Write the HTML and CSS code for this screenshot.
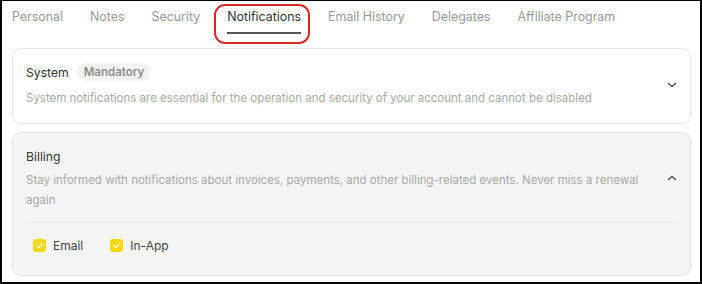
FILE: index.html
```html
<!DOCTYPE html>
<html lang="en">
<head>
    <meta charset="UTF-8">
    <meta name="viewport" content="width=device-width, initial-scale=1.0">
    <title>Notifications</title>
    <link rel="stylesheet" href="styles.css">
</head>
<body>
    <div class="frame">
        <!-- Settings tabs -->
        <nav class="tabs">
            <a class="tab">Personal</a>
            <a class="tab">Notes</a>
            <a class="tab">Security</a>
            <a class="tab active">Notifications<span class="highlight"></span></a>
            <a class="tab">Email History</a>
            <a class="tab">Delegates</a>
            <a class="tab">Affiliate Program</a>
        </nav>

        <div class="sections">
            <!-- System (collapsed) -->
            <div class="section">
                <div class="section-head">
                    <div class="section-text">
                        <div class="section-title">System <span class="badge">Mandatory</span></div>
                        <p class="section-desc">System notifications are essential for the operation and security of your account and cannot be disabled</p>
                    </div>
                    <svg class="chevron" width="12" height="12" viewBox="0 0 12 12"><path d="M2.5 4.5 L6 7.5 L9.5 4.5" fill="none" stroke="#444" stroke-width="1.3" stroke-linecap="round" stroke-linejoin="round"/></svg>
                </div>
            </div>

            <!-- Billing (expanded) -->
            <div class="section open">
                <div class="section-head">
                    <div class="section-text">
                        <div class="section-title">Billing</div>
                        <p class="section-desc">Stay informed with notifications about invoices, payments, and other billing-related events. Never miss a renewal again</p>
                    </div>
                    <svg class="chevron" width="12" height="12" viewBox="0 0 12 12"><path d="M2.5 7.5 L6 4.5 L9.5 7.5" fill="none" stroke="#444" stroke-width="1.3" stroke-linecap="round" stroke-linejoin="round"/></svg>
                </div>
                <div class="channels">
                    <label class="channel"><span class="check"><svg width="9" height="9" viewBox="0 0 10 10"><path d="M2 5.2 L4.2 7.3 L8 2.8" fill="none" stroke="#fff" stroke-width="1.3" stroke-linecap="round" stroke-linejoin="round"/></svg></span>Email</label>
                    <label class="channel"><span class="check"><svg width="9" height="9" viewBox="0 0 10 10"><path d="M2 5.2 L4.2 7.3 L8 2.8" fill="none" stroke="#fff" stroke-width="1.3" stroke-linecap="round" stroke-linejoin="round"/></svg></span>In-App</label>
                </div>
            </div>
        </div>
    </div>
</body>
</html>
```

FILE: styles.css
```css
html, body {
    margin: 0;
    padding: 0;
    background: #fff;
}
body {
    font-family: Inter, "Noto Sans", sans-serif;
    color: #333;
}
.frame {
    box-sizing: border-box;
    width: 702px;
    height: 284px;
    border-style: solid;
    border-color: #000;
    border-width: 1px 2px 2px 2px;
    padding: 0 9px 0 10px;
    overflow: hidden;
}
.tabs {
    display: flex;
    gap: 27px;
    height: 47px;
    align-items: flex-start;
}
.tab {
    position: relative;
    font-size: 12.4px;
    color: #9a9a9a;
    padding: 8px 0 0;
    height: 23px;
    cursor: pointer;
}
.tab.active {
    color: #333;
    border-bottom: 2px solid #555;
}
.highlight {
    position: absolute;
    left: -13px;
    right: -9px;
    top: 3px;
    height: 36px;
    border: 2px solid #d42a2a;
    border-radius: 11px;
}
.sections {
    display: flex;
    flex-direction: column;
    gap: 8px;
}
.section {
    border: 1px solid #e6e6e6;
    border-radius: 9px;
    background: #fff;
    padding: 13px 12px 15px 13px;
}
.section.open {
    background: #f5f5f5;
    padding-bottom: 22px;
}
.section-head {
    display: flex;
    align-items: center;
    gap: 20px;
}
.section-text {
    flex: 1;
}
.section-title {
    font-size: 12.2px;
    color: #333;
    display: flex;
    align-items: center;
    gap: 8px;
    height: 20px;
}
.badge {
    background: #f2f2f2;
    color: #8e8e8e;
    font-weight: 600;
    font-size: 11.5px;
    padding: 2px 7px;
    border-radius: 10px;
}
.section-desc {
    margin: 6px 0 0;
    font-size: 11.5px;
    line-height: 20px;
    color: #a9a9a9;
}
.section.open .section-desc {
    margin-top: 4px;
}
.chevron {
    flex: none;
}
.channels {
    display: flex;
    gap: 27px;
    border-top: 1px solid #e3e3e3;
    margin-top: 12px;
    padding: 15px 7px 0;
}
.channel {
    display: flex;
    align-items: center;
    gap: 7px;
    font-size: 12px;
    color: #444;
}
.check {
    width: 13px;
    height: 13px;
    border-radius: 3px;
    background: #f7d90d;
    display: flex;
    align-items: center;
    justify-content: center;
}
```
